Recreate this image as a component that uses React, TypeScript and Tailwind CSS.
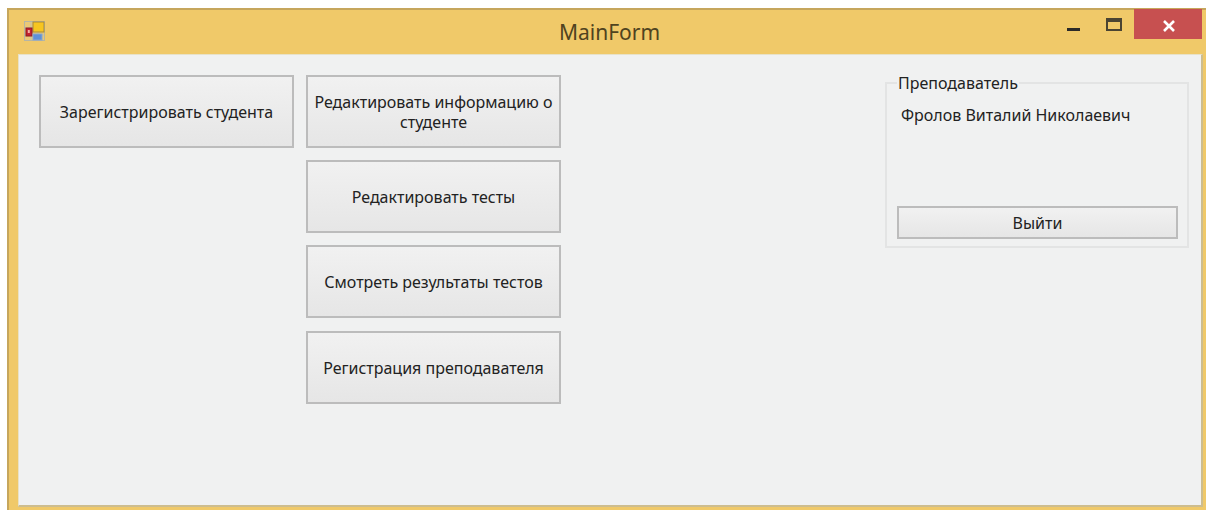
const font = "font-['Noto_Sans','Open_Sans',sans-serif]";

function FormButton({ label, className }: { label: string; className: string }) {
  return (
    <button
      type="button"
      className={`flex items-center justify-center border-2 border-[#bcbcbc] bg-gradient-to-b from-[#f1f1f1] to-[#e6e6e6] px-1 text-center text-[16px] leading-[20px] text-[#222] ${className}`}
    >
      {label}
    </button>
  );
}

function AppIcon() {
  return (
    <svg width="22" height="21" viewBox="0 0 22 21" className="mt-[11px] shrink-0">
      <rect x="0.5" y="0.5" width="20" height="19" fill="#e9c878" stroke="#b5b5a5" />
      <path d="M7 1v18M14 1v18M1 7h19M1 14h19" stroke="#c4c0a8" strokeWidth="1" />
      <rect x="9" y="1" width="11" height="10" fill="#f7c520" stroke="#a78a3a" />
      <rect x="2" y="7" width="6" height="8" fill="#c42030" stroke="#8c1a24" />
      <rect x="3.8" y="9" width="2" height="3" fill="#f2b0a0" />
      <rect x="9" y="13" width="9" height="6" fill="#5f90d8" stroke="#8aa6cc" />
    </svg>
  );
}

export default function App() {
  return (
    <div className={`h-[510px] w-[1206px] overflow-hidden bg-white pl-[7px] pt-[8px] ${font}`}>
      <div className="flex h-[502px] w-[1199px] flex-col border-l-2 border-t-2 border-l-[#c6a65c] border-t-[#c6a65c] bg-[#f0c969]">
        {/* Caption bar */}
        <div className="relative flex h-[44px] shrink-0 items-start pl-[15px]">
          <AppIcon />
          <span className="absolute left-0 right-0 top-[8px] pl-[4px] text-center text-[21px] leading-[28px] text-[#4f4320]">
            MainForm
          </span>
          <div className="ml-auto flex items-start pr-[4px]">
            <span className="mr-[26px] mt-[18px] h-[3px] w-[13px] bg-[#2b2a28]" />
            <span className="mr-[12px] mt-[8px] h-[13px] w-[16px] border-2 border-t-[4px] border-[#4a4432]" />
            <span className="-mt-px flex h-[30px] w-[68px] items-center justify-center bg-[#c75050] pl-[2px] pt-[3px]">
              <svg width="14" height="12" viewBox="0 0 14 12">
                <path d="M2 1l10 10M12 1L2 11" stroke="#fff" strokeWidth="2.6" fill="none" />
              </svg>
            </span>
          </div>
        </div>

        {/* Client area */}
        <div className="ml-[9px] mr-[3px] flex h-[453px] border border-b-2 border-r-2 border-[#e8e2c8] border-r-[#cdbd8f] border-b-[#cdbd8f] bg-[#f0f1f1] pl-[20px] pt-[20px]">
          <FormButton label="Зарегистрировать студента" className="h-[73px] w-[255px]" />
          <div className="ml-[12px] flex flex-col gap-[12px]">
            <FormButton label="Редактировать информацию о студенте" className="h-[73px] w-[255px]" />
            <FormButton label="Редактировать тесты" className="h-[73px] w-[255px]" />
            <FormButton label="Смотреть результаты тестов" className="h-[73px] w-[255px]" />
            <FormButton label="Регистрация преподавателя" className="mt-px h-[73px] w-[255px]" />
          </div>

          <fieldset className="ml-[324px] mt-[-2px] h-[175px] w-[304px] self-start border-2 border-[#e3e4e4] pl-[10px]">
            <legend className="px-px text-[16px] leading-[20px] text-[#222]">Преподаватель</legend>
            <div className="pl-[4px] pt-[12px] text-[16px] leading-[20px] text-[#222]">Фролов Виталий Николаевич</div>
            <FormButton label="Выйти" className="mt-[81px] h-[33px] w-[281px]" />
          </fieldset>
        </div>
      </div>
    </div>
  );
}
